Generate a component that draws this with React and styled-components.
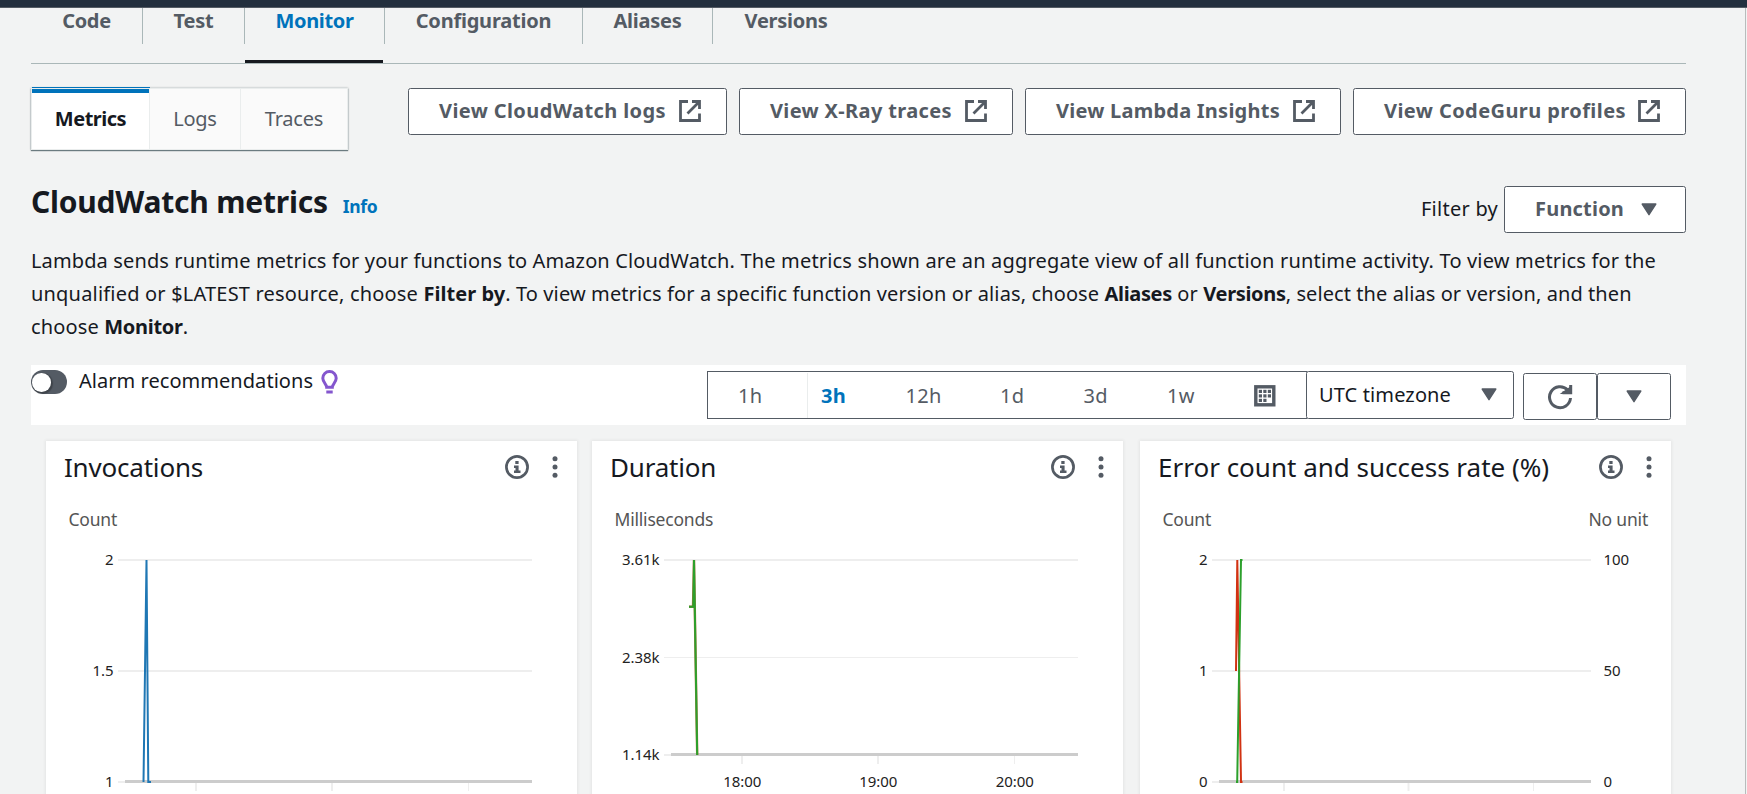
import React from "react";
import styled, { createGlobalStyle } from "styled-components";

const GlobalStyle = createGlobalStyle`
  *, *::before, *::after { box-sizing: border-box; }
  body {
    margin: 0;
    background: #f2f3f3;
    font-family: "Noto Sans", "Open Sans", sans-serif;
    font-size: 20px;
    color: #16191f;
    overflow: hidden;
  }
  svg { display: block; flex: none; }
`;

const grey = "#545b64";
const blue = "#0073bb";

/* ---------- page frame ---------- */

const Page = styled.div`
  width: 1747px;
  height: 794px;
  overflow: hidden;
  display: flex;
  flex-direction: column;
`;

const TopBar = styled.div`
  flex: none;
  height: 8px;
  background: #232f3e;
  border-bottom: 1px solid #545b64;
`;

const Body = styled.div`
  flex: 1;
  min-height: 0;
  display: flex;
`;

const Content = styled.main`
  width: 1745px;
  flex: none;
  padding: 0 59px 0 31px;
`;

const SideEdge = styled.aside`
  flex: 1;
  border-left: 1px solid #b8bcbc;
  background: #f2f3f3;
`;

/* ---------- function tabs ---------- */

const TabBar = styled.nav`
  display: flex;
  height: 56px;
  border-bottom: 1px solid #aab7b8;
`;

const Tab = styled.a`
  width: ${(p) => p.$w}px;
  height: 36px;
  text-align: center;
  line-height: 26px;
  font-weight: 700;
  letter-spacing: ${(p) => p.$ls || -0.27}px;
  color: ${(p) => (p.$active ? blue : grey)};
  border-right: ${(p) => (p.$last ? "none" : "1px solid #aab7b8")};
  position: relative;

  &::after {
    content: "";
    display: ${(p) => (p.$active ? "block" : "none")};
    position: absolute;
    left: 0;
    right: 1px;
    top: 52px;
    height: 3px;
    background: #16191f;
  }
`;

/* ---------- view switch and links ---------- */

const ActionRow = styled.div`
  display: flex;
  justify-content: space-between;
  align-items: flex-start;
  padding-top: 24px;
`;

const Segments = styled.div`
  display: flex;
  width: 317px;
  height: 62px;
  border: 1px solid #eaeded;
  box-shadow: 0 1px 1px 0 rgba(0, 28, 36, 0.5), 0 0 2px rgba(0, 28, 36, 0.35);
`;

const Segment = styled.button`
  flex: none;
  width: ${(p) => p.$w}px;
  padding: 0;
  border: none;
  border-right: ${(p) => (p.$last ? "none" : "1px solid #eaeded")};
  background: ${(p) => (p.$active ? "#fff" : "#fafafa")};
  box-shadow: ${(p) => (p.$active ? `inset 0 4px 0 ${blue}, 0 -1px 0 #eaeded, 0 -2px 0 ${blue}` : "none")};
  font: inherit;
  font-weight: ${(p) => (p.$active ? 700 : 400)};
  letter-spacing: ${(p) => p.$ls}px;
  line-height: 60px;
  color: ${(p) => (p.$active ? "#16191f" : grey)};
`;

const LinkGroup = styled.div`
  display: flex;
  gap: 12px;
`;

const Button = styled.button`
  display: flex;
  align-items: center;
  justify-content: space-between;
  width: ${(p) => p.$w}px;
  height: 47px;
  padding: 0 ${(p) => p.$pr}px 2px 30px;
  border: 1px solid ${grey};
  border-radius: 2.5px;
  background: #fff;
  color: ${grey};
  font: inherit;
  font-weight: 700;
  line-height: 28px;
  letter-spacing: ${(p) => p.$ls}px;
  white-space: nowrap;

  svg { margin-top: 1px; }
`;

/* ---------- heading ---------- */

const HeaderRow = styled.header`
  display: flex;
  justify-content: space-between;
  height: 47px;
  margin-top: 36px;
`;

const TitleGroup = styled.div`
  display: flex;
  align-items: baseline;
  height: 40px;
  line-height: 32px;
  gap: 15px;
`;

const Title = styled.h1`
  margin: 0;
  font-size: 30px;
  line-height: 32px;
  font-weight: 700;
  letter-spacing: -0.22px;
`;

const InfoLink = styled.a`
  font-size: 17.5px;
  font-weight: 700;
  letter-spacing: -0.35px;
  color: ${blue};
`;

const FilterGroup = styled.label`
  display: flex;
  align-items: center;
  gap: 6px;
  letter-spacing: 0.25px;

  > span { position: relative; top: -1px; }
`;

const Description = styled.p`
  margin: 11px 0 0;
  line-height: 33px;
  letter-spacing: 0.15px;
  white-space: nowrap;
`;

const Run = styled.span`
  letter-spacing: ${(p) => p.$ls}px;
`;

const Strong = styled.b`
  font-weight: 700;
  letter-spacing: ${(p) => p.$ls}px;
`;

/* ---------- metrics toolbar ---------- */

const Toolbar = styled.section`
  display: flex;
  justify-content: space-between;
  height: 60px;
  margin-top: 22px;
  padding: 6px 15px 0 0;
  background: #fff;
`;

const AlarmToggle = styled.div`
  display: flex;
  align-items: flex-start;
  margin-top: -1px;
`;

const Switch = styled.span`
  width: 36px;
  height: 24px;
  padding: 3px 1px;
  border-radius: 12px;
  background: ${grey};

  &::before {
    content: "";
    display: block;
    width: 18.5px;
    height: 18.5px;
    border-radius: 50%;
    background: #fff;
    box-shadow: 1px 1px 1px 1px rgba(0, 0, 0, 0.25);
  }
`;

const ToggleLabel = styled.span`
  margin: 0 8px 0 12px;
  line-height: 21px;
  letter-spacing: 0.041px;
`;

const Controls = styled.div`
  display: flex;
  align-items: flex-start;
`;

const RangePicker = styled.div`
  display: flex;
  width: 600px;
  height: 48px;
  border: 1px solid ${grey};
  border-right: none;
`;

const Range = styled.button`
  width: ${(p) => p.$w}px;
  padding: 0 0 0 ${(p) => p.$pl}px;
  margin: 1px 0 0;
  flex: none;
  border: none;
  border-right: ${(p) => (p.$rule ? "1px solid #eaeded" : "none")};
  background: none;
  text-align: left;
  font: inherit;
  line-height: 43px;
  letter-spacing: 0.25px;
  font-weight: ${(p) => (p.$active ? 700 : 400)};
  color: ${(p) => (p.$active ? blue : grey)};
`;

const Select = styled.div`
  display: flex;
  align-items: center;
  justify-content: space-between;
  width: 208px;
  height: 48px;
  margin-left: -1px;
  padding: 0 16px 1px 12px;
  border: 1px solid ${grey};
  border-radius: 2.5px;
  letter-spacing: 0.127px;
`;

const IconButton = styled.button`
  display: flex;
  align-items: center;
  justify-content: center;
  width: 74px;
  height: 47px;
  margin: 2px 0 0 ${(p) => p.$ml || 0}px;
  padding: 0;
  border: 1px solid ${grey};
  border-radius: 2.5px;
  background: #fff;
`;

/* ---------- metric cards ---------- */

const Cards = styled.section`
  display: flex;
  padding: 16px 0 0 15px;
  gap: 15px;
`;

const Card = styled.article`
  flex: none;
  width: 531px;
  height: 440px;
  background: #fff;
  box-shadow: 0 0 3px 1px rgba(0, 0, 0, 0.06);

  & + & + & { margin-left: 2px; }
`;

const CardHeader = styled.div`
  display: flex;
  align-items: center;
  height: 52px;
  padding: 0 19px 0 18px;
`;

const CardTitle = styled.h2`
  flex: 1;
  margin: 0;
  font-size: 26px;
  font-weight: 400;
  line-height: 50px;
  letter-spacing: ${(p) => p.$ls}px;
  white-space: nowrap;
`;

const CardIcons = styled.div`
  display: flex;
  align-items: center;
  gap: 23px;
`;

const Units = styled.div`
  display: flex;
  justify-content: space-between;
  padding: 0 23px 0 22.5px;
  margin-top: 14px;
  line-height: 24px;
  font-size: 17.5px;
  letter-spacing: -0.2px;
  color: #555;
`;

const Plot = styled.svg`
  margin-top: 10px;

  text {
    font-size: 15px;
    fill: #222;
    letter-spacing: -0.06px;
  }
`;

/* ---------- icons ---------- */

const External = () => (
  <svg width="22" height="22" viewBox="0 0 22 22" fill="none" stroke={grey} strokeWidth="2.8">
    <path d="M9 1.500H1.500v19h19V13.500" />
    <path d="M13 1.500h7.500V9M20 2L8.500 13.500" />
  </svg>
);

const Caret = () => (
  <svg width="16" height="13" viewBox="0 0 16 13">
    <path d="M1.200 1h13.600L8 11.700z" fill={grey} stroke={grey} strokeWidth="1.400" strokeLinejoin="round" />
  </svg>
);

const Bulb = () => (
  <svg width="17" height="24" viewBox="0 0 17 24">
    <path
      d="M8.500 1.600a6.600 6.600 0 0 0-6.700 6.700c0 2.600 1.400 4.300 2.700 6 .8 1.100 1.200 1.900 1.200 3h5.600c0-1.100.4-1.900 1.200-3 1.300-1.700 2.700-3.400 2.700-6a6.600 6.600 0 0 0-6.700-6.700z"
      fill="none"
      stroke="#8456ce"
      strokeWidth="3"
    />
    <rect x="5.300" y="20.500" width="6.400" height="3" fill="#8456ce" />
  </svg>
);

const Calendar = () => (
  <svg width="22" height="22" viewBox="0 0 22 22">
    <rect x="1.800" y="1.800" width="18" height="18" fill="#fff" stroke={grey} strokeWidth="3.400" />
    <g fill={grey}>
      {[[5, 5], [9.5, 5], [14, 5], [5, 9.5], [9.5, 9.5], [14, 9.5], [5, 14], [9.5, 14]].map(([x, y]) => (
        <rect key={`${x}-${y}`} x={x - 0.2} y={y - 0.2} width="3.200" height="3.200" />
      ))}
    </g>
  </svg>
);

const Refresh = () => (
  <svg width="26" height="26" viewBox="0 0 26 26" fill="none" stroke={grey} strokeWidth="3">
    <path d="M23.500 14A10.500 10.500 0 1 1 20.500 5.800" />
    <path d="M23.700 1v7.800h-8.200" />
    <path d="M17.500 8.500l5-3.500v3.500z" />
  </svg>
);

const InfoIcon = () => (
  <svg width="24" height="24" viewBox="0 0 24 24">
    <circle cx="12" cy="12" r="10.600" fill="none" stroke={grey} strokeWidth="2.700" />
    <path d="M10.300 6h3.300v3h-3.300zM9 10.500h4.600v5H15.500V18H9v-2.500h1.500V13H9z" fill={grey} />
  </svg>
);

const More = () => (
  <svg width="6" height="22" viewBox="0 0 6 22" fill={grey}>
    <circle cx="3" cy="2.800" r="2.500" />
    <circle cx="3" cy="11" r="2.500" />
    <circle cx="3" cy="19.200" r="2.500" />
  </svg>
);

/* ---------- charts: x relative to the card, y relative to the plot ---------- */

function Chart({ left, right = [], rows, grid, axis, ticks, times, children }) {
  const base = rows[rows.length - 1];
  return (
    <Plot width="531" height="260" viewBox="0 0 531 260">
      {rows.map((y, i) => (
        <g key={y}>
          <path d={`M${grid[0]} ${y}H${grid[1]}`} stroke="#eee" strokeWidth={i === 1 && times ? 1 : 2} />
          <text x={grid[0] - 4.5} y={y + 5} textAnchor="end">{left[i]}</text>
          {right[i] && <text x={grid[1] + 12.5} y={y + 5}>{right[i]}</text>}
        </g>
      ))}
      <path d={`M${axis} ${base - 0.5}H${grid[1]}`} stroke="#ccc" strokeWidth="3" />
      {ticks.map((x, i) => (
        <g key={x}>
          <path d={`M${x} ${base + 1}v8`} stroke="#eee" strokeWidth={i === 2 ? 1 : 2} />
          {times && <text x={x + 0.3} y={base + 32} textAnchor="middle">{times[i]}</text>}
        </g>
      ))}
      <g fill="none" strokeWidth="2">{children}</g>
    </Plot>
  );
}

function MetricCard({ title, ls, unit, rightUnit, children }) {
  return (
    <Card>
      <CardHeader>
        <CardTitle $ls={ls}>{title}</CardTitle>
        <CardIcons>
          <InfoIcon />
          <More />
        </CardIcons>
      </CardHeader>
      <Units>
        <span>{unit}</span>
        <span>{rightUnit}</span>
      </Units>
      {children}
    </Card>
  );
}

export default function App() {
  return (
    <Page>
      <GlobalStyle />
      <TopBar />
      <Body>
        <Content>
          <TabBar>
            <Tab $w={112} $ls={-0.35}>Code</Tab>
            <Tab $w={102} $ls={-0.2}>Test</Tab>
            <Tab $w={140} $ls={-0.35} $active>Monitor</Tab>
            <Tab $w={198} $ls={-0.22}>Configuration</Tab>
            <Tab $w={130}>Aliases</Tab>
            <Tab $w={146} $last>Versions</Tab>
          </TabBar>

          <ActionRow>
            <Segments>
              <Segment $w={118} $ls={-0.5} $active>Metrics</Segment>
              <Segment $w={91} $ls={-0.3}>Logs</Segment>
              <Segment $w={106} $ls={-0.2} $last>Traces</Segment>
            </Segments>
            <LinkGroup>
              <Button $w={319} $pr={25} $ls={0.39}>View CloudWatch logs<External /></Button>
              <Button $w={274} $pr={25} $ls={0.35}>View X-Ray traces<External /></Button>
              <Button $w={316} $pr={25} $ls={0.24}>View Lambda Insights<External /></Button>
              <Button $w={333} $pr={25} $ls={0.42}>View CodeGuru profiles<External /></Button>
            </LinkGroup>
          </ActionRow>

          <HeaderRow>
            <TitleGroup>
              <Title>CloudWatch metrics</Title>
              <InfoLink>Info</InfoLink>
            </TitleGroup>
            <FilterGroup>
              <span>Filter by</span>
              <Button $w={182} $pr={28} $ls={0.2}>Function<Caret /></Button>
            </FilterGroup>
          </HeaderRow>

          <Description>
            <Run $ls={0.125}>Lambda sends runtime metrics for your functions to Amazon CloudWatch. </Run>
            <Run $ls={0.178}>The metrics shown are an aggregate view of all function runtime activity. To view metrics for the</Run>
            <br />
            <Run $ls={0.19}>unqualified or $LATEST resource, choose </Run>
            <Strong $ls={0.04}>Filter by</Strong>
            <Run $ls={0.12}>. To view metrics for a specific function version or alias, choose </Run>
            <Strong $ls={-0.35}>Aliases</Strong> or <Strong $ls={-0.33}>Versions</Strong>
            <Run $ls={0.08}>, select the alias or version, and then</Run>
            <br />
            choose <Strong $ls={-0.3}>Monitor</Strong>.
          </Description>

          <Toolbar>
            <AlarmToggle>
              <Switch />
              <ToggleLabel>Alarm recommendations</ToggleLabel>
              <Bulb />
            </AlarmToggle>
            <Controls>
              <RangePicker>
                <Range $w={100} $pl={30} $rule>1h</Range>
                <Range $w={83} $pl={13} $active>3h</Range>
                <Range $w={97} $pl={14.5}>12h</Range>
                <Range $w={83} $pl={12}>1d</Range>
                <Range $w={84} $pl={12.5}>3d</Range>
                <Range $w={98} $pl={12}>1w</Range>
                <Range $w={54} $pl={1}><Calendar /></Range>
              </RangePicker>
              <Select>
                UTC timezone
                <Caret />
              </Select>
              <IconButton $ml={9}><Refresh /></IconButton>
              <IconButton><Caret /></IconButton>
            </Controls>
          </Toolbar>

          <Cards>
            <MetricCard title="Invocations" ls={-0.2} unit="Count">
              <Chart left={["2", "1.5", "1"]} rows={[19, 130, 241]} grid={[72, 486]} axis={79} ticks={[150, 286, 422.5]}>
                <path d="M97.500 241L100.500 19L102.300 241H105" stroke="#1f77b4" />
              </Chart>
            </MetricCard>

            <MetricCard title="Duration" ls={-0.2} unit="Milliseconds">
              <Chart left={["3.61k", "2.38k", "1.14k"]} rows={[19, 116.5, 214]} grid={[72, 486]} axis={79} ticks={[150, 286, 422.5]} times={["18:00", "19:00", "20:00"]}>
                <path d="M97 65.700H101L102 19L105.200 214" stroke="#b5703c" strokeWidth="2.400" />
                <path d="M97 65.700H101.300L102 19L105.200 214" stroke="#2ca02c" />
              </Chart>
            </MetricCard>

            <MetricCard title="Error count and success rate (%)" ls={0} unit="Count" rightUnit="No unit">
              <Chart left={["2", "1", "0"]} right={["100", "50", "0"]} rows={[19, 130, 241]} grid={[72, 451]} axis={79} ticks={[144, 268.5, 393.5]}>
                <path d="M96 130L97.300 19L101 241H102.500" stroke="#d13212" />
                <path d="M96 241H97.200L101 19H102.500" stroke="#2ca02c" />
              </Chart>
            </MetricCard>
          </Cards>
        </Content>
        <SideEdge />
      </Body>
    </Page>
  );
}
